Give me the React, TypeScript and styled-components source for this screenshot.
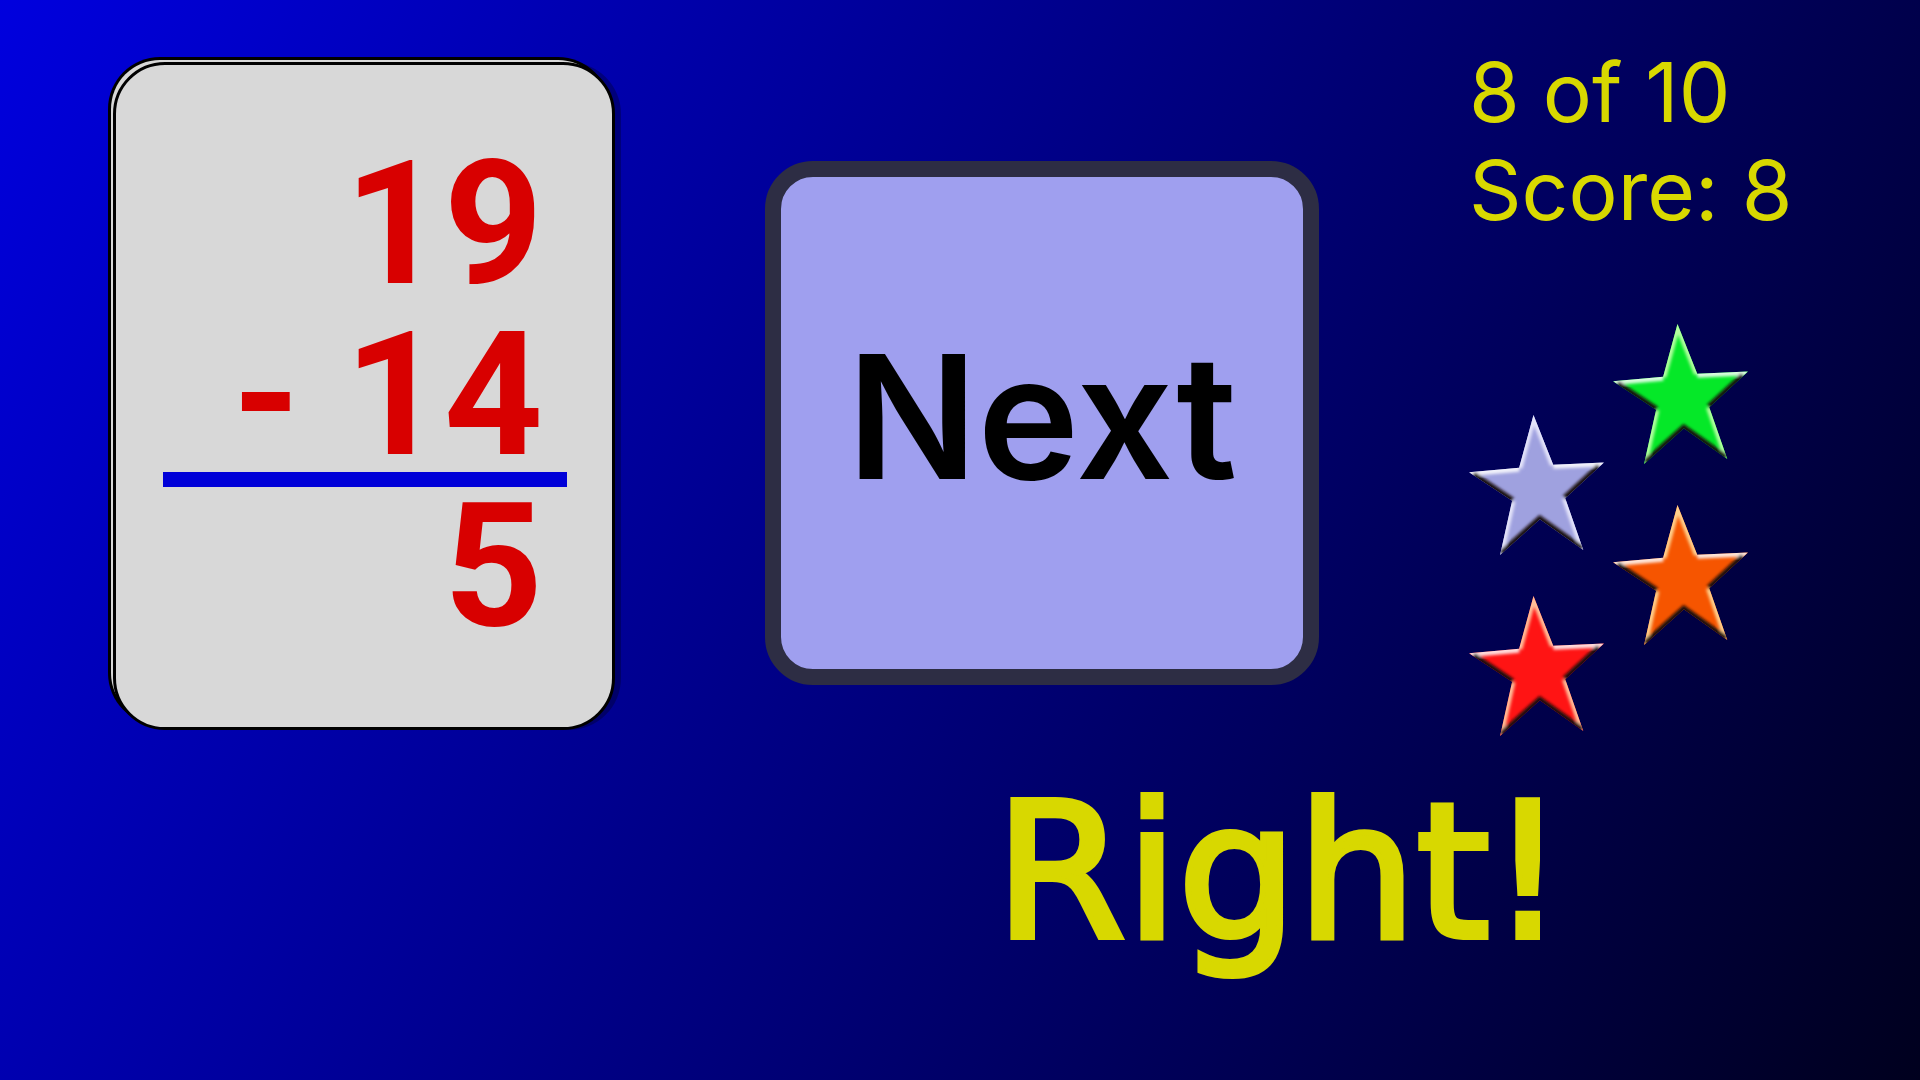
import React from "react";
import styled, { createGlobalStyle } from "styled-components";

const GlobalStyle = createGlobalStyle`
  *, *::before, *::after { box-sizing: border-box; }
  body { margin: 0; }
`;

const Page = styled.main`
  min-height: 100vh;
  display: grid;
  grid-template-columns: 502fr 554fr 395fr;
  grid-template-rows: auto 1fr;
  column-gap: 150px;
  align-items: start;
  padding: 44px 56px 0 113px;
  background: linear-gradient(119deg, #0000de, #00001e);
`;

const Card = styled.section`
  aspect-ratio: 502 / 668;
  margin-top: 18px;
  padding: 74px 45px 0 47px;
  border: 3px solid #000;
  border-radius: 52px;
  background: #d8d8d8;
  box-shadow:
    -5px -5px 0 -3px #d8d8d8,
    -5px -5px 0 0 #000,
    6px 0 0 0 rgba(0, 0, 0, 0.28);
`;

const Row = styled.div`
  display: flex;
  justify-content: flex-end;
  gap: 44px;
  padding-right: 24px;
  color: #d80000;
  font: 700 173px/171px Roboto, "Liberation Sans", sans-serif;
`;

const Rule = styled.hr`
  height: 15px;
  margin: -9px 0 -6px;
  border: 0;
  background: #0000d8;
`;

const NextButton = styled.button`
  aspect-ratio: 554 / 524;
  margin-top: 117px;
  padding: 0 0 14px;
  border: 16px solid #2d2d44;
  border-radius: 48px;
  background: #9f9fef;
  color: #000;
  font: 600 172px/200px Inter, "Liberation Sans", sans-serif;
  cursor: pointer;
`;

const Side = styled.aside`
  display: flex;
  flex-direction: column;
`;

const ScoreLine = styled.p`
  margin: 0;
  color: #d8d800;
  font: 400 82px/98px Inter, "Liberation Sans", sans-serif;
  white-space: nowrap;
`;

const Stars = styled.div`
  display: flex;
  gap: 9px;
  margin-top: 84px;
`;

const StarColumn = styled.div<{ $drop?: boolean }>`
  display: flex;
  flex-direction: column;
  gap: 41px;
  padding-top: ${(p) => (p.$drop ? "91px" : "0")};
`;

const StarShape = styled.svg`
  display: block;
  width: 135px;
  height: 140px;
`;

const Message = styled.p`
  grid-column: 2 / 4;
  margin: 0;
  padding: 26px 0 0 230px;
  color: #d8d800;
  font: 400 188px/220px "DejaVu Sans", sans-serif;
  -webkit-text-stroke: 6px #d8d800;
`;

const OUTLINE =
  "M193 0 252 149 404 142 288 249 342 404 212 312 93 419 129 257 0 171 150 158Z";

function Star({ id, color, glow }: { id: string; color: string; glow: string }) {
  return (
    <StarShape viewBox="0 0 404 419" role="img" aria-label="star">
      <defs>
        <clipPath id={`${id}-clip`}>
          <path d={OUTLINE} />
        </clipPath>
        <filter id={`${id}-soft`} x="-20%" y="-20%" width="140%" height="140%">
          <feGaussianBlur stdDeviation="5" />
        </filter>
      </defs>
      <path d={OUTLINE} fill={color} />
      <g clipPath={`url(#${id}-clip)`} fill="none">
        <g filter={`url(#${id}-soft)`}>
          <path d="M150 158 193 0 252 149M288 249 342 404M93 419 129 257" stroke={glow} strokeWidth="20" />
          <path d="M0 171 150 158M252 149 404 142" stroke="#fff" strokeOpacity="0.85" strokeWidth="24" />
          <path d="M390 155 288 249M338 401 212 312 97 415M129 257 12 179" stroke="#151008" strokeWidth="20" />
        </g>
      </g>
    </StarShape>
  );
}

export default function App() {
  return (
    <>
      <GlobalStyle />
      <Page>
        <Card aria-label="Flash card">
          <Row>19</Row>
          <Row>
            <span>-</span>
            <span>14</span>
          </Row>
          <Rule />
          <Row>5</Row>
        </Card>
        <NextButton type="button">Next</NextButton>
        <Side>
          <ScoreLine>8 of 10</ScoreLine>
          <ScoreLine>Score: 8</ScoreLine>
          <Stars>
            <StarColumn $drop>
              <Star id="lavender" color="#9fa1df" glow="#e4e4fa" />
              <Star id="red" color="#ff1414" glow="#ffc09a" />
            </StarColumn>
            <StarColumn>
              <Star id="green" color="#05e828" glow="#b4ffa0" />
              <Star id="orange" color="#f65500" glow="#ffd08c" />
            </StarColumn>
          </Stars>
        </Side>
        <Message role="status">Right!</Message>
      </Page>
    </>
  );
}
